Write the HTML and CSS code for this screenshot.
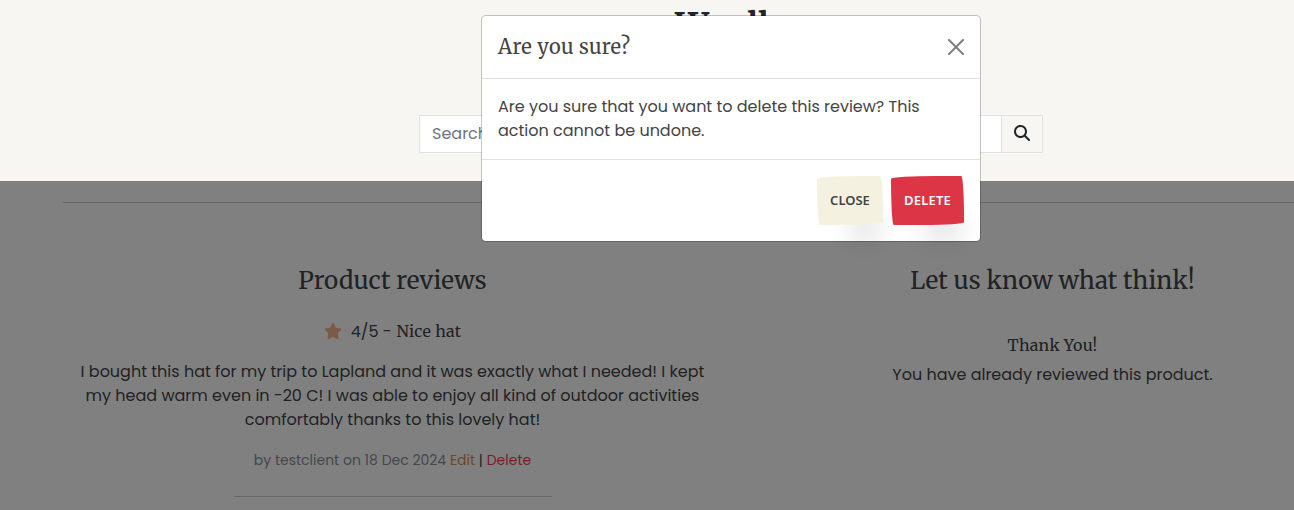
FILE: index.html
```
<!DOCTYPE html>
<html lang="en">
<head>
<meta charset="utf-8">
<title>Woolly</title>
<link rel="stylesheet" href="styles.css">
</head>
<body>
<div class="page">
  <header class="site-header">
    <div class="logo">Woolly</div>
    <form class="search">
      <input class="search-input" type="text" placeholder="Search" aria-label="Search">
      <button class="search-button" type="button" aria-label="Submit search">
        <svg viewBox="0 0 512 512" width="16" height="16"><path fill="currentColor" d="M416 208c0 45.900-14.900 88.300-40 122.700L502.600 457.400c12.500 12.500 12.500 32.800 0 45.300s-32.800 12.500-45.300 0L330.700 376c-34.400 25.200-76.800 40-122.700 40C93.100 416 0 322.900 0 208S93.100 0 208 0S416 93.100 416 208zM208 352a144 144 0 1 0 0-288 144 144 0 1 0 0 288z"/></svg>
      </button>
    </form>
  </header>
  <main class="content">
    <hr class="rule">
    <div class="columns">
      <section class="column">
        <h2 class="section-title">Product reviews</h2>
        <div class="rating">
          <svg class="star" viewBox="0 0 576 512" width="18" height="16"><path fill="currentColor" d="M316.900 18C311.600 7 300.400 0 288.100 0s-23.400 7-28.800 18L195 150.300 51.400 171.500c-12 1.800-22 10.200-25.700 21.700s-.7 24.200 7.900 32.700L137.800 329 113.200 474.700c-2 12 3 24.200 12.900 31.300s23 8 33.800 2.300l128.300-68.500 128.300 68.500c10.800 5.700 23.900 4.900 33.800-2.300s14.900-19.300 12.900-31.300L438.500 329 542.700 225.900c8.600-8.500 11.700-21.200 7.900-32.700s-13.700-19.900-25.700-21.700L381.200 150.300 316.900 18z"/></svg>
          <span class="score">4/5 -</span>
          <h3 class="review-title">Nice hat</h3>
        </div>
        <p class="review-text">I bought this hat for my trip to Lapland and it was exactly what I needed! I kept my head warm even in -20 C! I was able to enjoy all kind of outdoor activities comfortably thanks to this lovely hat!</p>
        <div class="meta"><span class="byline">by testclient on 18 Dec 2024</span> <a class="edit">Edit</a> | <a class="delete">Delete</a></div>
        <hr class="review-rule">
      </section>
      <section class="column">
        <h2 class="section-title">Let us know what think!</h2>
        <h3 class="thanks">Thank You!</h3>
        <p class="notice">You have already reviewed this product.</p>
      </section>
    </div>
  </main>
</div>
<div class="modal-layer">
  <div class="modal">
    <div class="modal-header">
      <h5 class="modal-title">Are you sure?</h5>
      <svg class="close-icon" viewBox="0 0 16 16" width="16" height="16"><path d="M.293.293a1 1 0 0 1 1.414 0L8 6.586 14.293.293a1 1 0 1 1 1.414 1.414L9.414 8l6.293 6.293a1 1 0 0 1-1.414 1.414L8 9.414l-6.293 6.293a1 1 0 0 1-1.414-1.414L6.586 8 .293 1.707a1 1 0 0 1 0-1.414z"/></svg>
    </div>
    <div class="modal-body">Are you sure that you want to delete this review? This action cannot be undone.</div>
    <div class="modal-footer">
      <button class="btn btn-close" type="button">CLOSE</button>
      <button class="btn btn-delete" type="button">DELETE</button>
    </div>
  </div>
</div>
</body>
</html>
```
FILE: styles.css
```
* { box-sizing: border-box; }
body {
  margin: 0;
  height: 510px;
  overflow: hidden;
  background: #fff;
  color: #212529;
  font: 400 16px/24px Poppins, Inter, sans-serif;
}
h2, h3, h5, p { margin: 0; }
h2, h3, h5, .logo {
  font-family: Merriweather, "DejaVu Serif Condensed", "DejaVu Serif", serif;
  font-weight: 400;
}
.page { height: 510px; overflow: hidden; }

.site-header {
  height: 181px;
  padding-left: 419px;
  background: #f7f6f2;
}
.logo { width: 625px; height: 115px; padding-top: 6px; font-size: 33px; line-height: 40px; font-weight: 700; text-align: center; }
.search { display: flex; width: 624px; height: 38px; }
.search-input {
  flex: 1;
  padding: 0 12px;
  border: 1px solid #dee2e6;
  border-radius: 0;
  background: #fff;
  font: inherit;
}
.search-input::placeholder { color: #6c757d; }
.search-button {
  display: grid;
  place-items: center;
  width: 42px;
  padding: 0 0 2px;
  margin-left: -1px;
  border: 1px solid #dee2e6;
  background: #f7f6f2;
  color: #212529;
}

.content { height: 329px; padding: 21px 0 0 63px; background: #808080; color: #202224; }
.rule { height: 1px; margin: 0; border: 0; background: #686868; }
.columns { display: grid; grid-template-columns: 659px 572px; padding-top: 61px; }
.column { text-align: center; }
.column + .column { padding-left: 89px; }
.section-title { font-size: 24.200px; line-height: 34px; letter-spacing: .08px; }
.rating { display: flex; justify-content: center; align-items: center; height: 24px; margin-top: 22px; }
.star { color: #7b5b48; margin: 0 9px 2px 0; }
.score { margin-right: 5px; }
.review-title { padding-bottom: 2px; font-size: 16px; line-height: 22px; letter-spacing: .25px; }
.review-text { margin-top: 16px; padding: 0 12px; }
.meta { margin-top: 18px; font-size: 14px; line-height: 21px; }
.byline { color: #43484c; }
.edit { color: #6e452f; }
.delete { color: #7c1c27; }
.review-rule { width: 318px; height: 1px; margin: 25px auto 0; border: 0; background: #686868; }
.thanks { margin-top: 36px; font-size: 16px; line-height: 22px; letter-spacing: .25px; }
.notice { margin-top: 7px; }

.modal-layer { position: absolute; top: 15px; left: 481px; }
.modal {
  width: 500px;
  border: 1px solid rgba(0, 0, 0, .22);
  border-radius: 5px;
  background: #fff;
  background-clip: padding-box;
  color: #444;
}
.modal-header {
  display: flex;
  align-items: center;
  justify-content: space-between;
  height: 63px;
  padding: 0 16px;
  border-bottom: 1px solid #dee2e6;
}
.modal-title { font-size: 20px; line-height: 30px; letter-spacing: .33px; }
.close-icon { opacity: .5; fill: #000; }
.modal-body { padding: 16px; }
.modal-footer {
  display: flex;
  justify-content: flex-end;
  gap: 8px;
  height: 82px;
  padding: 16px 16px 0 0;
  border-top: 1px solid #dee2e6;
}
.btn {
  height: 49px;
  padding: 0 0 2px;
  border: 0;
  border-radius: 255px 15px 225px 15px / 15px 225px 15px 255px;
  box-shadow: rgba(0, 0, 0, .2) 15px 28px 25px -18px;
  font: 600 13px/20px "Noto Sans", sans-serif;
}
.btn-close { width: 66px; background: #f5f1e0; color: #444; }
.btn-delete { width: 73px; background: #dc3545; color: #fff; letter-spacing: .2px; }
```
